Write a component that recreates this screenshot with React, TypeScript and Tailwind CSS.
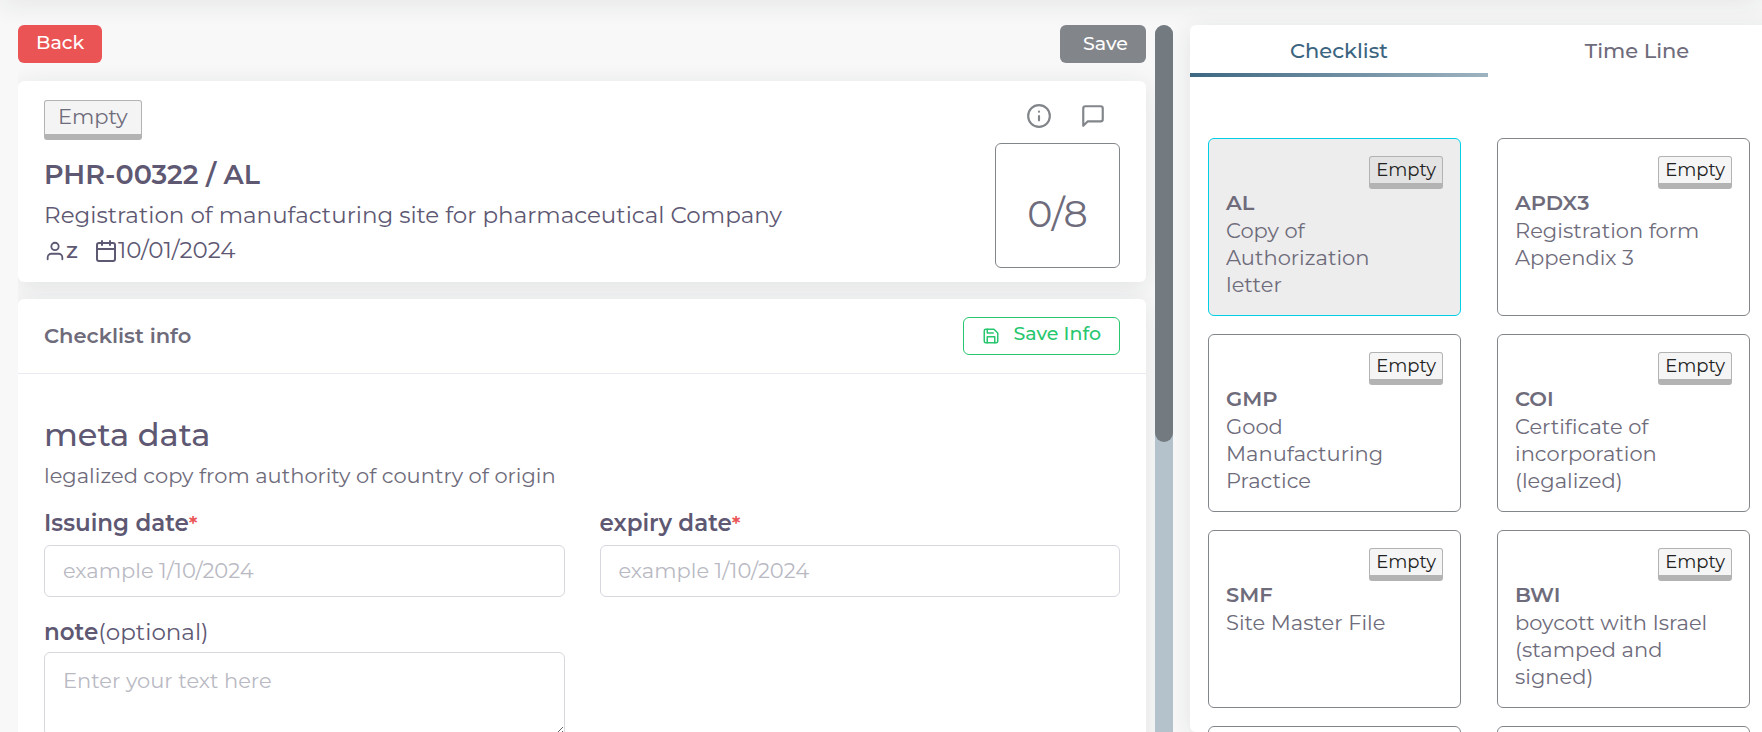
import { FiCalendar, FiInfo, FiMessageSquare, FiSave, FiUser } from "react-icons/fi";

type Item = { code: string; name: string; active?: boolean };

const items: Item[] = [
  { code: "AL", name: "Copy of Authorization letter", active: true },
  { code: "APDX3", name: "Registration form Appendix 3" },
  { code: "GMP", name: "Good Manufacturing Practice" },
  { code: "COI", name: "Certificate of incorporation (legalized)" },
  { code: "SMF", name: "Site Master File" },
  { code: "BWI", name: "boycott with Israel (stamped and signed)" },
  { code: "", name: "" },
  { code: "", name: "" },
];

function ChecklistCard({ item }: { item: Item }) {
  return (
    <button
      type="button"
      className={`flex h-[178px] flex-col items-start rounded-md border px-[17px] pt-[17px] text-left ${
        item.active ? "border-[#00cfe8] bg-[#ededed]" : "border-[#82868b] bg-white"
      }`}
    >
      {item.code && (
        <>
          <span className="self-end rounded-[3px] border border-b-[6px] border-[#b3b3b3] bg-black/4 px-[6px] text-[18px] leading-[26px] text-[#222]">
            Empty
          </span>
          <span className="text-[21px] leading-[28px] font-semibold">{item.code}</span>
          <span className="pr-4 text-[21px] leading-[27px]">{item.name}</span>
        </>
      )}
    </button>
  );
}

function DateField({ id, label }: { id: string; label: string }) {
  return (
    <div className="flex flex-col">
      <label htmlFor={id} className="text-[23px] leading-[30px] font-semibold text-[#5e5873]">
        {label}
        <span className="text-[21px] text-[#ea5455]">*</span>
      </label>
      <input
        id={id}
        type="text"
        placeholder="example 1/10/2024"
        className="mt-[6px] h-[52px] rounded-md border border-[#d8d6de] px-[18px] pb-[2px] text-[21px] placeholder:text-[#b9b9c3]"
      />
    </div>
  );
}

export default function App() {
  return (
    <div className="relative h-screen overflow-hidden bg-[#f8f8f8] font-['Montserrat','Inter',sans-serif] text-[#6e6b7b]">
      <div className="absolute inset-x-0 -top-4 h-4 shadow-[0_4px_24px_rgba(34,41,47,0.1)]" />
      <div className="-mr-6 grid h-full grid-cols-[minmax(0,1155fr)_minmax(0,596fr)] gap-[17px] pt-[25px] pl-[18px]">
        <section className="flex min-h-0 overflow-hidden">
          <div className="flex min-w-0 flex-1 flex-col overflow-hidden pr-[9px]">
            <div className="flex shrink-0 justify-between">
              <button type="button" className="h-[38px] rounded-md bg-[#ea5455] px-[18px] pb-[2px] text-[19px] leading-[36px] font-medium text-white">
                Back
              </button>
              <button type="button" className="h-[38px] rounded-md bg-[#82868b] pr-[18px] pl-[23px] text-[19px] leading-[38px] font-medium text-white">
                Save
              </button>
            </div>

            <div className="mt-[18px] flex shrink-0 justify-between rounded-md bg-white px-[26px] pt-[19px] pb-[14px] shadow-[0_4px_24px_rgba(34,41,47,0.1)]">
              <div className="flex flex-col items-start text-[#5e5873]">
                <span className="rounded-[3px] border border-b-[6px] border-[#b3b3b3] bg-[#f4f4f4] px-[13px] pb-px text-[21px] leading-8 text-[#6e6b7b]">
                  Empty
                </span>
                <h1 className="mt-[19px] text-[27px] leading-8 font-semibold">PHR-00322 / AL</h1>
                <p className="mt-2 text-[23px] leading-8">Registration of manufacturing site for pharmaceutical Company</p>
                <div className="mt-1 flex text-[23px] leading-[30px]">
                  <FiUser size={22} className="mt-[5px]" />
                  <span className="font-medium">z</span>
                  <FiCalendar size={24} className="mt-1 ml-4" />
                  <span>10/01/2024</span>
                </div>
              </div>
              <div className="flex flex-col items-end">
                <div className="flex gap-[28px] pr-[14px] text-[#82868b]">
                  <button type="button" aria-label="Information" className="pt-[3px]">
                    <FiInfo size={26} />
                  </button>
                  <button type="button" aria-label="Comments" className="pt-[3px]">
                    <FiMessageSquare size={26} />
                  </button>
                </div>
                <div className="mt-[14px] flex size-[125px] items-center justify-center rounded-md border border-[#82868b] pt-[15px] text-[38px]">
                  0/8
                </div>
              </div>
            </div>

            <div className="mt-[17px] min-h-[500px] shrink-0 rounded-md bg-white shadow-[0_4px_24px_rgba(34,41,47,0.1)]">
              <div className="flex h-[75px] items-center justify-between border-b border-[#ebe9f1] px-[26px]">
                <h2 className="text-[21px] font-semibold">Checklist info</h2>
                <button type="button" className="flex h-[38px] items-center gap-[14px] rounded-md border border-[#28c76f] px-[18px] text-[19px] leading-[34px] font-medium text-[#28c76f]">
                  <FiSave size={18} />
                  <span className="pb-1">Save Info</span>
                </button>
              </div>
              <form className="px-[26px] pt-[41px]">
                <h3 className="text-[32px] leading-10 font-medium text-[#5e5873]">meta data</h3>
                <p className="mt-[6px] text-[21px] leading-[30px]">legalized copy from authority of country of origin</p>
                <div className="mt-[17px] grid grid-cols-2 gap-x-[35px] gap-y-5">
                  <DateField id="issuing" label="Issuing date" />
                  <DateField id="expiry" label="expiry date" />
                  <div className="flex flex-col">
                    <label htmlFor="note" className="text-[23px] leading-[30px] text-[#5e5873]">
                      <span className="font-semibold">note</span>
                      <span>(optional)</span>
                    </label>
                    <textarea
                      id="note"
                      placeholder="Enter your text here"
                      className="mt-[5px] h-[84px] rounded-md border border-[#d8d6de] px-[18px] py-3 text-[21px] leading-8 placeholder:text-[#b9b9c3]"
                    />
                  </div>
                </div>
              </form>
            </div>
          </div>
          <div className="w-[18px] shrink-0 rounded-t-full bg-[#b4c2cc]">
            <div className="h-[59%] rounded-full bg-[#737a80]" />
          </div>
        </section>

        <aside className="min-h-0 rounded-md bg-white shadow-[0_4px_24px_rgba(34,41,47,0.1)]">
          <div role="tablist" className="flex">
            <button role="tab" aria-selected="true" type="button" className="flex-1 text-[21px] font-medium text-[#3a6480]">
              <span className="block pt-1 leading-[44px]">Checklist</span>
              <span className="block h-1 bg-linear-to-r from-[#3d6882] to-[#9eb3c0]" />
            </button>
            <button role="tab" aria-selected="false" type="button" className="flex-1 pt-1 pb-1 text-[21px] leading-[44px] font-medium">
              Time Line
            </button>
          </div>
          <div className="grid grid-cols-2 gap-x-9 gap-y-[18px] pt-[61px] pr-9 pl-[18px]">
            {items.map((item, i) => (
              <ChecklistCard key={i} item={item} />
            ))}
          </div>
        </aside>
      </div>
    </div>
  );
}
